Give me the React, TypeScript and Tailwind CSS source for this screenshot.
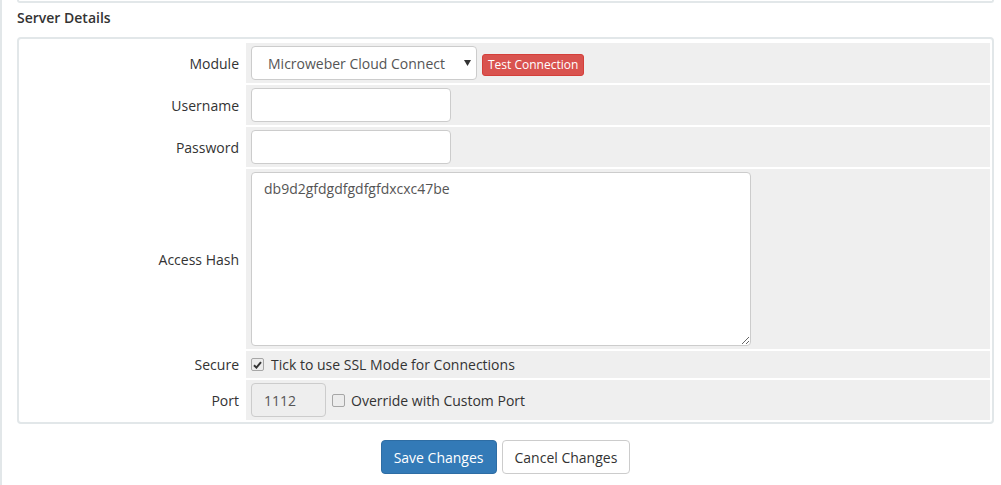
import { useState } from 'react';

const font = "font-['Open_Sans','Liberation_Sans',sans-serif]";

function Tick({ checked, onChange }: { checked: boolean; onChange: () => void }) {
  return (
    <span
      onClick={onChange}
      className="flex h-[13px] w-[13px] shrink-0 items-center justify-center rounded-[2px] border border-[#a6a6a6] bg-[#ececec]"
    >
      {checked && (
        <svg width="9" height="8" viewBox="0 0 9 8">
          <path d="M1 4.2 L3.4 6.6 L8 1.2" fill="none" stroke="#333" strokeWidth="2" />
        </svg>
      )}
    </span>
  );
}

function Row({ label, children, h = 'py-[3px]' }: { label: string; children: React.ReactNode; h?: string }) {
  return (
    <div className="flex gap-[2px]">
      <div className="flex w-[223px] shrink-0 items-center justify-end pr-[5px] text-[14px] text-[#333]">{label}</div>
      <div className={`flex flex-1 items-center bg-[#efefef] pl-[5px] ${h}`}>{children}</div>
    </div>
  );
}

export default function App() {
  const [ssl, setSsl] = useState(true);
  const [customPort, setCustomPort] = useState(false);

  const input = 'h-[34px] rounded-[4px] border border-[#ccc] px-[12px] text-[14px] text-[#555] outline-none';

  return (
    <div className={`${font} min-h-screen border-l-2 border-[#e2e7e9] bg-white pl-[15px] pr-[7px]`}>
      <div className="h-[3px] rounded-b-[4px] border-x-2 border-b-2 border-[#e2e7e9]" />
      <h2 className="mt-[5px] text-[14px] leading-[20px] font-semibold text-[#333]">Server Details</h2>

      <div className="mt-[9px] rounded-[4px] border-2 border-[#e2e7e9] px-[2px] pt-[4px] pb-[2px]">
        <div className="flex flex-col gap-[2px]">
          <Row label="Module">
            <div className="relative">
              <select className={`${input} w-[226px] appearance-none bg-white pl-[16px]`} defaultValue="mw">
                <option value="mw">Microweber Cloud Connect</option>
              </select>
              <svg className="pointer-events-none absolute right-[6px] top-[14px]" width="7" height="6" viewBox="0 0 7 6">
                <path d="M0 0 H7 L3.5 6 Z" fill="#333" />
              </svg>
            </div>
            <button className="ml-[5px] mt-[3px] h-[22px] rounded-[3px] border border-[#d43f3a] bg-[#d9534f] px-[5px] text-[12px] leading-[18px] text-white">
              Test Connection
            </button>
          </Row>
          <Row label="Username">
            <input className={`${input} w-[200px] bg-white`} />
          </Row>
          <Row label="Password">
            <input type="password" className={`${input} w-[200px] bg-white`} />
          </Row>
          <Row label="Access Hash">
            <textarea
              className="h-[174px] w-[500px] rounded-[4px] border border-[#ccc] bg-white px-[12px] py-[6px] text-[14px] leading-[20px] text-[#555] outline-none"
              defaultValue="db9d2gfdgdfgdfgfdxcxc47be"
            />
          </Row>
          <Row label="Secure" h="h-[27px]">
            <label className="flex items-center text-[14px] text-[#333]">
              <Tick checked={ssl} onChange={() => setSsl(!ssl)} />
              <span className="ml-[7px]">Tick to use SSL Mode for Connections</span>
            </label>
          </Row>
          <Row label="Port">
            <input disabled className={`${input} w-[75px] bg-[#eee]`} defaultValue="1112" />
            <label className="ml-[6px] flex items-center text-[14px] text-[#333]">
              <Tick checked={customPort} onChange={() => setCustomPort(!customPort)} />
              <span className="ml-[6px]">Override with Custom Port</span>
            </label>
          </Row>
        </div>
      </div>

      <div className="mt-[16px] flex justify-center gap-[5px]">
        <button className="h-[34px] rounded-[4px] border border-[#2e6da4] bg-[#337ab7] px-[12px] text-[14px] text-white">
          Save Changes
        </button>
        <button className="h-[34px] rounded-[4px] border border-[#ccc] bg-white px-[12px] text-[14px] text-[#333]">
          Cancel Changes
        </button>
      </div>
    </div>
  );
}
